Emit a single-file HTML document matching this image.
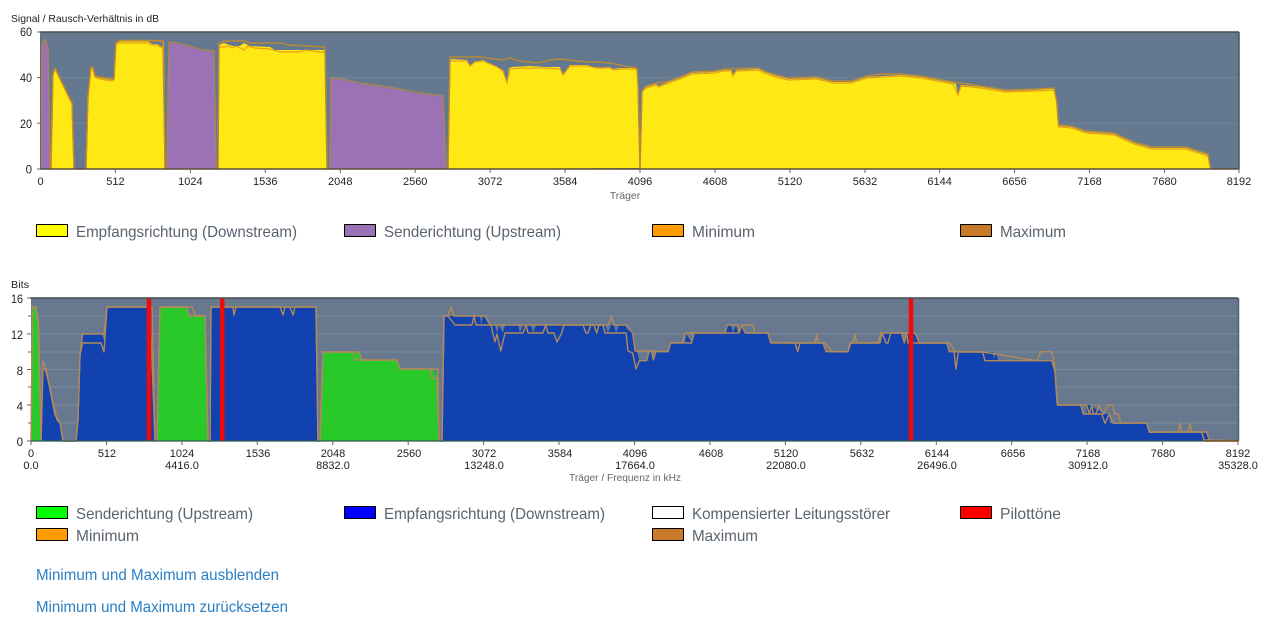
<!DOCTYPE html>
<html lang="de"><head><meta charset="utf-8"><title>Spektrum</title>
<style>
html,body{margin:0;padding:0;background:#fff;width:1270px;height:620px;overflow:hidden}
svg{display:block}
text{font-family:"Liberation Sans",sans-serif}
.t{font-size:11px;fill:#222;text-anchor:middle}
.y{font-size:11.5px;fill:#222;text-anchor:end}
.h{font-size:10.5px;fill:#222}
.c{font-size:10.5px;fill:#666;text-anchor:middle}
.l{font-size:16px;fill:#59636e}
.a{font-size:16px;fill:#2a7fc4}
.s{stroke:#000;stroke-width:1}
</style></head><body>
<svg width="1270" height="620" viewBox="0 0 1270 620" xmlns="http://www.w3.org/2000/svg">
<rect width="1270" height="620" fill="#fff"/>

<!-- Chart 1 -->
<text class="h" x="11" y="22" textLength="148" lengthAdjust="spacingAndGlyphs">Signal / Rausch-Verhältnis in dB</text>
<rect x="41" y="32" width="1198" height="137" fill="#64798f"/>
<path d="M41 77.6H1238M41 123.3H1238" stroke="#71859a" stroke-width="1"/>

<g fill="#9b72b5">
<polygon points="41,169 42,45 45,40 48,48 50,169"/>
<polygon points="167,169 169,43 177,44 193,48 203,51 214,52 216,169"/>
<polygon points="330,169 331,79 342,80 360,84 380,87 400,90 420,94 443,97 446,169"/>
</g>
<g fill="#ffe914">
<polygon points="51,169 53,75 55,69 72,104 74,169"/>
<polygon points="86,169 88,97 91,68 93,69 95,77 100,78 112,80 114,80 116,43 120,41.5 148,41.5 152,44 157,44 162,47 164,42 165,169"/>
<polygon points="218,169 219,45 224,43 232,46 240,46 244,43 250,46 270,47 275,50 300,50 325,50 327,169"/>
<polygon points="448,169 450,59 467,60 470,66 475,62 483,60 497,67 503,70 507,83 509,68 513,67 530,66 545,67 560,67 563,75 570,65 587,65 597,68 610,67 613,69 620,68 637,68 638,85 640,168"/>
<polygon points="640,169 642,92 646,87 656,84 659,86 666,83 680,78 692,73 714,72 724,70 731.6,70 733,75 736,70 758.5,69 764.5,72 776.6,76 788.6,79 817,78 833,82 851,82 867,77 901,75 921,77 953,83 956,84 958,95 960.6,85 981.5,87 1005.6,91 1037.7,90 1042,89 1054,89 1056.6,100 1058.6,126 1072,127 1086,132 1114,134 1134,143 1152,148 1186,148 1208.5,155 1210.5,169"/>
</g>
<!-- min line -->
<g fill="none" stroke="#e9a015" stroke-width="1.2">
<polyline points="51,169 53,75 55,69 72,104 74,169"/>
<polyline points="86,169 88,97 91,68 93,69 95,77 100,79 112,81 114,80 116,44 120,43 148,43 152,45 157,45 162,48 163,48 165,169"/>
<polyline points="218,169 219,47 224,47 228,46 232,48 236,46 240,48 244,50 248,46 255,48 270,49 280,52 300,52 305,50 320,52 325,52 327,169"/>
<polyline points="448,169 450,61 467,61 470,66 475,62 483,61 497,67 503,71 507,83 510,69 520,68 545,68 560,69 563,75 570,66 587,66 597,68 610,68 613,70 620,69 637,69 638,85 640,168"/>
<polyline points="640,169 642,92 646,88 656,85 659,87 666,84 680,79 692,74 714,73 724,71 731,71 733,76 736,71 758,70 764,73 776,77 788,80 817,79 833,83 851,83 867,78 901,76 921,78 953,84 958,95 961,86 981,88 1005,92 1037,91 1054,90 1056.6,101 1058.6,127 1072,128 1086,133 1114,135 1134,144 1152,149 1186,149 1208,156 1210.5,169"/>
</g>
<!-- max line -->
<g fill="none" stroke="#ad8457" stroke-width="1.4" stroke-linejoin="round">
<polyline points="41,169 42,45 45,39 48,48 50,169"/>
<polyline points="51,169 53,74 55,68 72,103 74,169" stroke="#c98a28"/>
<polyline points="86,169 88,97 91,67 93,68 95,76 100,77 112,79 114,79 116,43 120,40.5 148,40.5 163,41 165,169" stroke="#c98a28"/>
<polyline points="167,169 169,42 177,43 193,47 203,50 214,51 216,169"/>
<polyline points="218,169 219,43 224,41 240,41 244,41 250,43 282,43 288,45 325,47 327,169" stroke="#b88a3a"/>
<polyline points="330,169 331,78 342,79 360,83 380,86 400,89 420,93 443,96 446,169"/>
<polyline points="448,169 450,57 470,57 480,57 487,58 503,60 510,58 520,61 537,63 550,60 560,59 587,62 597,62 610,63 630,67 637,68 638,85 640,168" stroke="#b88a3a"/>
<polyline points="640,169 642,91 646,86 656,83 666,82 680,77 692,72 714,71 724,69 758,68 764,71 776,75 788,78 817,77 833,81 851,81 867,76 880,74 901,74 921,76 953,82 981,86 1005,90 1037,89 1054,88 1056.6,100 1058.6,125 1072,126 1086,131 1114,133 1134,142 1152,147 1186,147 1208,154 1210.5,168" stroke="#b88a3a"/>
</g>
<path d="M40 32H1239" stroke="#454c52" stroke-width="1.5"/>
<path d="M1239 32V169" stroke="#4c5660" stroke-width="1.5"/>
<path d="M40.5 32V169" stroke="#6a6a6a" stroke-width="1"/>
<path d="M40 169H1239" stroke="#5d4f36" stroke-width="1.5"/>
<path d="M37 32h4M37 77.6h4M37 123.3h4M37 169h4M115.4 169v4M190.4 169v4M265.3 169v4M340.3 169v4M415.2 169v4M490.1 169v4M565.1 169v4M640 169v4M715 169v4M790 169v4M865 169v4M939.6 169v4M1014.5 169v4M1089.5 169v4M1164.5 169v4M1239 169v4" stroke="#666" stroke-width="1"/>
<text class="y" x="32" y="36" textLength="12" lengthAdjust="spacingAndGlyphs">60</text>
<text class="y" x="32" y="82" textLength="12" lengthAdjust="spacingAndGlyphs">40</text>
<text class="y" x="32" y="128" textLength="12" lengthAdjust="spacingAndGlyphs">20</text>
<text class="y" x="32" y="173.5">0</text>
<g>
<text class="t" x="40.5" y="185">0</text>
<text class="t" x="115.4" y="185">512</text>
<text class="t" x="190.4" y="185">1024</text>
<text class="t" x="265.3" y="185">1536</text>
<text class="t" x="340.3" y="185">2048</text>
<text class="t" x="415.2" y="185">2560</text>
<text class="t" x="490.1" y="185">3072</text>
<text class="t" x="565.1" y="185">3584</text>
<text class="t" x="640" y="185">4096</text>
<text class="t" x="715" y="185">4608</text>
<text class="t" x="790" y="185">5120</text>
<text class="t" x="865" y="185">5632</text>
<text class="t" x="939.6" y="185">6144</text>
<text class="t" x="1014.5" y="185">6656</text>
<text class="t" x="1089.5" y="185">7168</text>
<text class="t" x="1164.5" y="185">7680</text>
<text class="t" x="1239" y="185">8192</text>
</g>
<text class="c" x="625" y="199">Träger</text>

<!-- Legend 1 -->
<rect class="s" x="36.5" y="224.5" width="31" height="12" fill="#ffff00"/>
<text class="l" x="76" y="237" textLength="221" lengthAdjust="spacingAndGlyphs">Empfangsrichtung (Downstream)</text>
<rect class="s" x="344.5" y="224.5" width="31" height="12" fill="#9b72b5"/>
<text class="l" x="384" y="237" textLength="177" lengthAdjust="spacingAndGlyphs">Senderichtung (Upstream)</text>
<rect class="s" x="652.5" y="224.5" width="31" height="12" fill="#ff9a00"/>
<text class="l" x="692" y="237" textLength="63" lengthAdjust="spacingAndGlyphs">Minimum</text>
<rect class="s" x="960.5" y="224.5" width="31" height="12" fill="#c87a28"/>
<text class="l" x="1000" y="237" textLength="66" lengthAdjust="spacingAndGlyphs">Maximum</text>

<!-- Chart 2 -->
<text class="h" x="11" y="288" textLength="18" lengthAdjust="spacingAndGlyphs">Bits</text>
<rect x="31" y="298" width="1207" height="143" fill="#68798f"/>
<path d="M31 316H1238M31 334H1238M31 352H1238M31 369.5H1238M31 387H1238M31 405H1238M31 423H1238" stroke="#7b8b9b" stroke-width="1"/>

<g fill="#28c928">
<polygon points="31,441 32.5,307 36,307 38.5,325 41,441"/>
<polygon points="157,441 160,307 187,307 190,316 205,316 208.3,441"/>
<polygon points="320,441 323,351.5 359,351.5 362,360 397,360 400,369 430,369 433,369 436,378 437,369 438,370 439,441"/>
</g>
<g fill="#1241b0">
<polygon points="41.7,441 43.3,361 48,380 53,402 57,420 60,423 63.3,441"/>
<polygon points="76,441 78.3,420 80,355 82.7,334 101.7,334 105,343 107,307 152,307 155,441"/>
<polygon points="209,441 210.7,307 316,307 318.3,441"/>
<polygon points="441.7,441 444,316 480,316 481,324 483,316 485,316 490,325 495,325 497,333 499,325 503,333 505,325 518,325 520,333 523,325 531,325 533,333 536,325 605,325 608,333 611,325 614,325 616,333 619,325 625,325 627,329 632.7,333 635,351 637,351 639,360 646,360 649,351 652,351 654,360 656.7,351.7 668,351.7 670.7,343 683,343 685,343 686,334 692,343 694,333 725,333 727,325 731,325 733,333 736,325 738,333 741,325 745,333 768,333 770.7,343 823,343 826,351.7 831,351.7 848,351.7 850.7,343 853,343 880,343 882.3,333 891,333 901,333 904,343 907,333 915,333 919,343 947,343 950,351.7 983,351.7 986,352 993,352 994,360 996,352 998,360 1052,360.7 1055,371.7 1057.3,405 1081,405 1083,414 1087,414 1086,405 1089,405 1105,414 1109,414 1110,423 1147,423 1149.3,432 1206.7,432 1209.3,441"/>
</g>
<!-- max/min lines -->
<g fill="none" stroke="#b08a5c" stroke-width="1.4" stroke-linejoin="round">
<polyline points="31,441 32.5,307 36,307 38.5,325 41,441 43,361 48,380 53,402 57,420 60,423 63,441 76,441 78,420 80,355 82.5,334 101,334 104,334 107,307 150,307 152,307 155,441 157,441 160,307 187,307 192,307 195,315 205,316 208,441 210,441 211,307 230,307 233,307 234,315 236,307 280,307 283,315 285,307 290,307 293,315 295,307 316,307 318,441 320,441 323,352 359,352 362,360 397,360 400,369 432,369 438,369 439,441 442,441 444,316 448,316 451,307 454,316 476,316 485,316 490,325 608,325 611.7,316 614,325 626.7,325 632.7,333 635,351 651,351 668,351.7 670.7,343 682.7,343 685,333 725,333 727.3,325 738.3,325 739,333 741.7,325 752.7,325 755,333 768,333 770.7,343 815,343 816.7,334 818.3,343 825,343 832.7,351.7 841.7,351.7 848,351.7 850,343 853,343 855,334 856.7,343 878,343 880.7,333 915,333 919.3,343 946.7,343 950,343 955,351.7 983,352 1037,360.7 1040.7,351.7 1051.7,351.7 1054,360.7 1055,371.7 1057.3,405 1086.7,405 1089.3,414 1091.7,405 1093.3,414 1096,414 1099,405 1103.3,414 1108.3,405 1112.3,405 1115,414 1118.3,414 1120.7,423 1146.7,423 1149.3,432 1178.3,432 1180,423 1181.7,432 1188.3,432 1190,423 1191.7,432 1206.7,432 1209.3,440 1238,441"/>
<polyline points="31,441 32.5,307 36,307 38.5,325 41,441 43,369 46,369 55,415 60,423 63,441 76,441 78,420 80,355 82.5,343 101,343 104,352 107,307 150,307 155,441 157,441 160,307 186.7,307 189.3,316 205,316 208,441 210,441 211,307 316,307 318,441 320,441 323,352 352,352 355,360 397,360 400,369 430,369 432,378 437,378 439,441 442,441 444,316 448,316 455,325 472,325 474,316 476,325 486,325 491,325 493,334 495,342 497,334 500.7,351 505,333 523,333 526,325 528,333 543,333 545.7,325 548,333 554,333 557,342 561.7,333 564,325 583,325 586,333 588,333 590.7,325 594,325 596.7,333 599,325 603,325 605,333 626,333 628,351 632.7,353 636,369 639.3,360.7 646.7,360.7 649,351.7 651.7,351.7 653.3,360 655.7,351.7 668,351.7 670.7,342.7 691.7,343 694,333 739,333 741.7,325 745,333 768,333 770.7,342.7 795,343 797.7,351.7 800,343 823,343 826,351.7 848,351.7 850.7,343 880,343 882.3,333 886,343 888,343 890.7,333 901.7,333 904.3,343 906.7,333 908,343 946.7,343 949.3,351.7 954,351.7 956,369 958.3,352 982.7,352 985,360.7 1051.7,360.7 1055,371.7 1057.3,405 1080.7,405 1083.3,414 1101.7,414 1105,423.3 1109.3,414 1113.3,423.3 1146.7,423 1149.3,432.3 1201.7,432 1204,440 1238,441"/>
</g>
<g fill="#f00a0a">
<rect x="146.7" y="298" width="4.5" height="143"/>
<rect x="220" y="298" width="4.5" height="143"/>
<rect x="908.8" y="298" width="4.5" height="143"/>
</g>
<path d="M30 298H1238" stroke="#454c52" stroke-width="1.5"/>
<path d="M1238.5 298V441" stroke="#555e68" stroke-width="1.5"/>
<path d="M31 441H1210" stroke="#2f5a50" stroke-width="1.2"/>
<path d="M1205 441H1238" stroke="#6a4d20" stroke-width="1.5"/>
<path d="M27 298h4M28 316h3M27 334h4M28 352h3M27 369.5h4M28 387h3M27 405h4M28 423h3M27 441h4M31 441v4M106.5 441v4M182 441v4M257.3 441v4M332.8 441v4M408.2 441v4M483.6 441v4M559 441v4M634.5 441v4M710 441v4M785.4 441v4M860.8 441v4M936.3 441v4M1011.7 441v4M1087.1 441v4M1162.6 441v4M1238 441v4" stroke="#666" stroke-width="1"/>
<text class="y" x="23" y="303" textLength="12" lengthAdjust="spacingAndGlyphs">16</text>
<text class="y" x="23" y="339" textLength="12" lengthAdjust="spacingAndGlyphs">12</text>
<text class="y" x="23" y="375">8</text>
<text class="y" x="23" y="410.5">4</text>
<text class="y" x="23" y="446">0</text>
<g>
<text class="t" x="31" y="457">0</text>
<text class="t" x="107" y="457">512</text>
<text class="t" x="182" y="457">1024</text>
<text class="t" x="258" y="457">1536</text>
<text class="t" x="333" y="457">2048</text>
<text class="t" x="409" y="457">2560</text>
<text class="t" x="484" y="457">3072</text>
<text class="t" x="560" y="457">3584</text>
<text class="t" x="635" y="457">4096</text>
<text class="t" x="711" y="457">4608</text>
<text class="t" x="786" y="457">5120</text>
<text class="t" x="862" y="457">5632</text>
<text class="t" x="937" y="457">6144</text>
<text class="t" x="1013" y="457">6656</text>
<text class="t" x="1088" y="457">7168</text>
<text class="t" x="1163" y="457">7680</text>
<text class="t" x="1238" y="457">8192</text>
<text class="t" x="31" y="469">0.0</text>
<text class="t" x="182" y="469">4416.0</text>
<text class="t" x="333" y="469">8832.0</text>
<text class="t" x="484" y="469">13248.0</text>
<text class="t" x="635" y="469">17664.0</text>
<text class="t" x="786" y="469">22080.0</text>
<text class="t" x="937" y="469">26496.0</text>
<text class="t" x="1088" y="469">30912.0</text>
<text class="t" x="1238" y="469">35328.0</text>
</g>
<text class="c" x="625" y="481" textLength="112" lengthAdjust="spacingAndGlyphs">Träger / Frequenz in kHz</text>

<!-- Legend 2 -->
<rect class="s" x="36.5" y="506.5" width="31" height="12" fill="#00ff00"/>
<text class="l" x="76" y="519" textLength="177" lengthAdjust="spacingAndGlyphs">Senderichtung (Upstream)</text>
<rect class="s" x="344.5" y="506.5" width="31" height="12" fill="#0000ff"/>
<text class="l" x="384" y="519" textLength="221" lengthAdjust="spacingAndGlyphs">Empfangsrichtung (Downstream)</text>
<rect class="s" x="652.5" y="506.5" width="31" height="12" fill="#ffffff"/>
<text class="l" x="692" y="519" textLength="198" lengthAdjust="spacingAndGlyphs">Kompensierter Leitungsstörer</text>
<rect class="s" x="960.5" y="506.5" width="31" height="12" fill="#ff0000"/>
<text class="l" x="1000" y="519" textLength="61" lengthAdjust="spacingAndGlyphs">Pilottöne</text>
<rect class="s" x="36.5" y="528.5" width="31" height="12" fill="#ff9a00"/>
<text class="l" x="76" y="541" textLength="63" lengthAdjust="spacingAndGlyphs">Minimum</text>
<rect class="s" x="652.5" y="528.5" width="31" height="12" fill="#c87a28"/>
<text class="l" x="692" y="541" textLength="66" lengthAdjust="spacingAndGlyphs">Maximum</text>

<text class="a" x="36" y="580" textLength="243" lengthAdjust="spacingAndGlyphs">Minimum und Maximum ausblenden</text>
<text class="a" x="36" y="612" textLength="252" lengthAdjust="spacingAndGlyphs">Minimum und Maximum zurücksetzen</text>
</svg>
</body></html>
